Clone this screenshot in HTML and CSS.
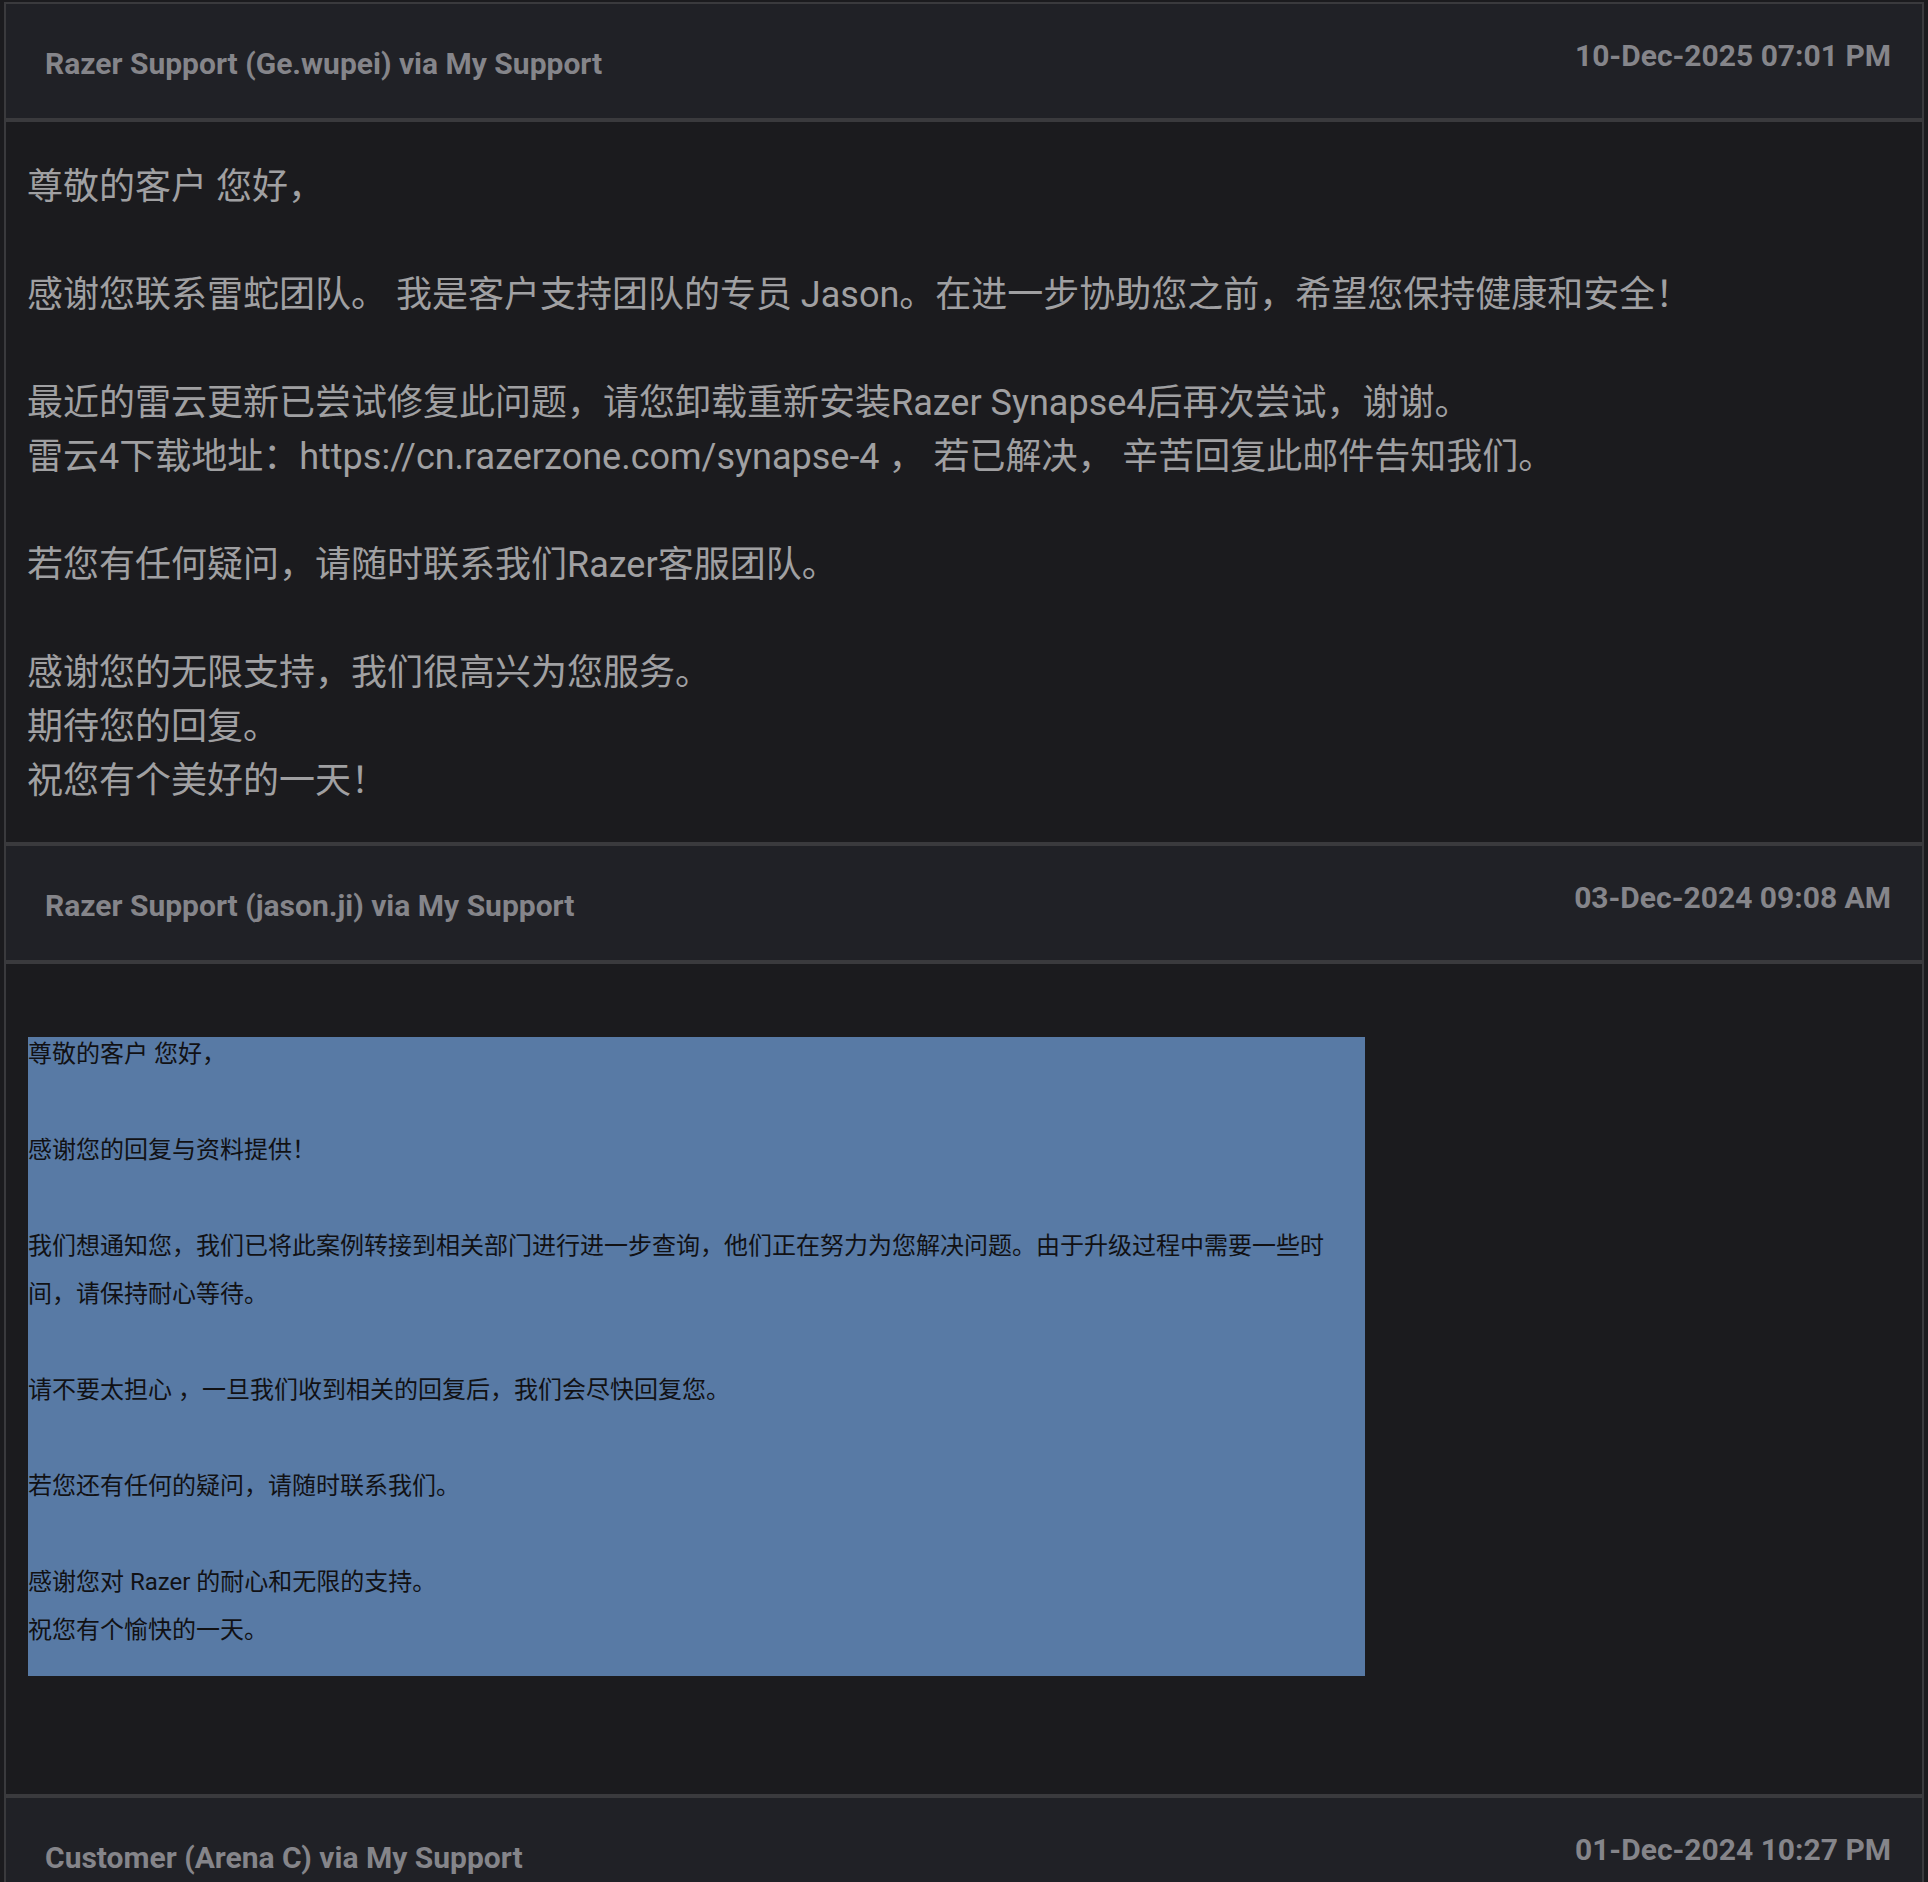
FILE: index.html
```html
<!DOCTYPE html>
<html lang="zh-CN">
<head>
<meta charset="utf-8">
<title>Razer Support</title>
<link rel="stylesheet" href="styles.css">
</head>
<body>
<div class="thread">
  <article class="msg">
    <header class="msg-head">
      <span class="author">Razer Support (Ge.wupei) via My Support</span>
      <span class="date">10-Dec-2025 07:01 PM</span>
    </header>
    <div class="msg-body plain">
      <p>尊敬的客户 您好，</p>
      <p>感谢您联系雷蛇团队。 我是客户支持团队的专员 Jason。在进一步协助您之前，希望您保持健康和安全！</p>
      <p>最近的雷云更新已尝试修复此问题，请您卸载重新安装Razer Synapse4后再次尝试，谢谢。<br>雷云4下载地址：https://cn.razerzone.com/synapse-4 ， 若已解决， 辛苦回复此邮件告知我们。</p>
      <p>若您有任何疑问，请随时联系我们Razer客服团队。</p>
      <p>感谢您的无限支持，我们很高兴为您服务。<br>期待您的回复。<br>祝您有个美好的一天！</p>
    </div>
  </article>
  <article class="msg">
    <header class="msg-head">
      <span class="author">Razer Support (jason.ji) via My Support</span>
      <span class="date">03-Dec-2024 09:08 AM</span>
    </header>
    <div class="msg-body html">
      <div class="mail">
        <div class="mail-text">
          <p>尊敬的客户 您好，</p>
          <p>感谢您的回复与资料提供！</p>
          <p>我们想通知您，我们已将此案例转接到相关部门进行进一步查询，他们正在努力为您解决问题。由于升级过程中需要一些时间，请保持耐心等待。</p>
          <p>请不要太担心 ，一旦我们收到相关的回复后，我们会尽快回复您。</p>
          <p>若您还有任何的疑问，请随时联系我们。</p>
          <p>感谢您对 Razer 的耐心和无限的支持。<br>祝您有个愉快的一天。</p>
        </div>
      </div>
    </div>
  </article>
  <article class="msg">
    <header class="msg-head">
      <span class="author">Customer (Arena C) via My Support</span>
      <span class="date">01-Dec-2024 10:27 PM</span>
    </header>
  </article>
</div>
</body>
</html>
```

FILE: styles.css
```css
html, body {
  margin: 0;
  padding: 0;
  background: #1b1b1e;
}

body {
  font-family: Roboto, "Noto Sans CJK SC", sans-serif;
  height: 1882px;
  overflow: hidden;
}

.thread {
  margin: 2px 4px 0 4px;
  border: 2px solid #3a3a3d;
  border-bottom: none;
  background: #1b1b1e;
}

.msg + .msg {
  border-top: 4px solid #3a3a3d;
}

.msg-head {
  box-sizing: border-box;
  height: 118px;
  display: flex;
  justify-content: space-between;
  align-items: flex-start;
  background: #202126;
  border-bottom: 4px solid #3a3a3d;
  padding: 0 31px 0 39px;
  color: #85858a;
  font-weight: 700;
  font-size: 30px;
  line-height: 30px;
}

.author {
  padding-top: 45px;
}

.date {
  padding-top: 37px;
}

.msg-body {
  background: #1b1b1e;
}

.msg-body p {
  margin: 0;
}

.plain {
  box-sizing: border-box;
  height: 720px;
  padding: 38px 20px 0 21px;
  color: #a0a0a2;
  font-size: 36px;
  line-height: 54px;
}

.plain p {
  margin-bottom: 54px;
}

.plain p:last-child {
  margin-bottom: 0;
}

.html {
  box-sizing: border-box;
  height: 830px;
  padding: 73px 0 0 22px;
}

.mail {
  box-sizing: border-box;
  width: 1337px;
  height: 639px;
  background: #587aa5;
  padding-right: 24px;
  color: #111114;
  font-size: 24px;
  line-height: 48px;
}

.mail-text {
  position: relative;
  top: -7px;
}

.mail p {
  margin-bottom: 48px;
}

.mail p:last-child {
  margin-bottom: 0;
}
```
